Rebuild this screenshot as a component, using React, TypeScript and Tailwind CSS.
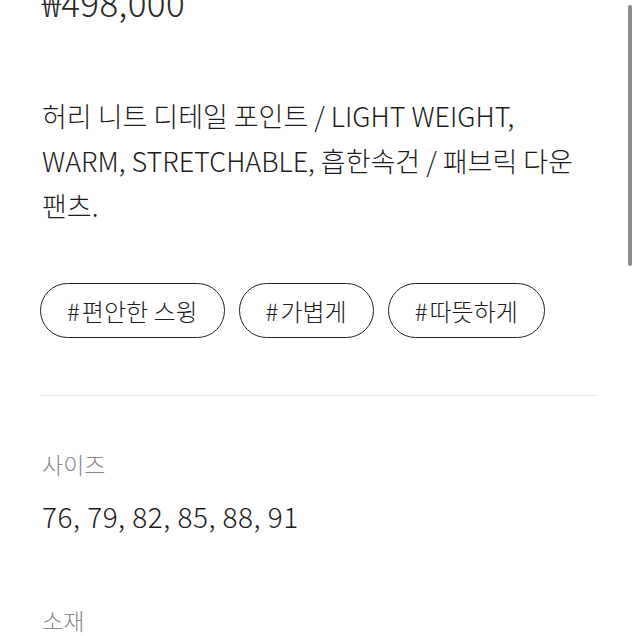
import React from 'react'

const tags = ['편안한 스윙', '가볍게', '따뜻하게']

export default function App() {
  return (
    <div
      className="relative h-[636px] w-[636px] overflow-hidden bg-white font-light text-[#1c1c1c]"
      style={{ fontFamily: '"Noto Sans CJK KR", "Noto Sans", sans-serif' }}
    >
      <div className="px-10">
        <p className="-mt-[16px] pl-[2px] text-[35px] leading-[35px] tracking-[0.4px] text-[#2a2a2a]">₩498,000</p>

        <p className="mt-[74px] whitespace-nowrap pl-[2px] text-[27px] leading-[45px]">
          허리 니트 디테일 포인트 / LIGHT WEIGHT,
          <br />
          WARM, STRETCHABLE, 흡한속건 / 패브릭 다운
          <br />
          팬츠.
        </p>

        <div className="mt-[55px] flex gap-[14px]">
          {tags.map((t) => (
            <span
              key={t}
              className="flex h-[55px] items-center rounded-full border-[1.5px] border-[#222] px-[26px] text-[24px]"
            >
              <span className="mr-[2px]">#</span>
              {t}
            </span>
          ))}
        </div>

        <div className="mt-[57px] h-px bg-[#e6e6e6]" />

        <p className="mt-[52px] pl-[2px] text-[23px] leading-[32px] text-[#888]">사이즈</p>
        <p className="mt-[20px] pl-[2px] text-[28px] leading-[32px] tracking-[0.5px]">76, 79, 82, 85, 88, 91</p>

        <p className="mt-[72px] pl-[2px] text-[23px] leading-[32px] text-[#888]">소재</p>
      </div>

      <div className="absolute right-[4px] top-[5px] h-[261px] w-[4px] rounded-full bg-[#8c8c8c]" />
    </div>
  )
}
